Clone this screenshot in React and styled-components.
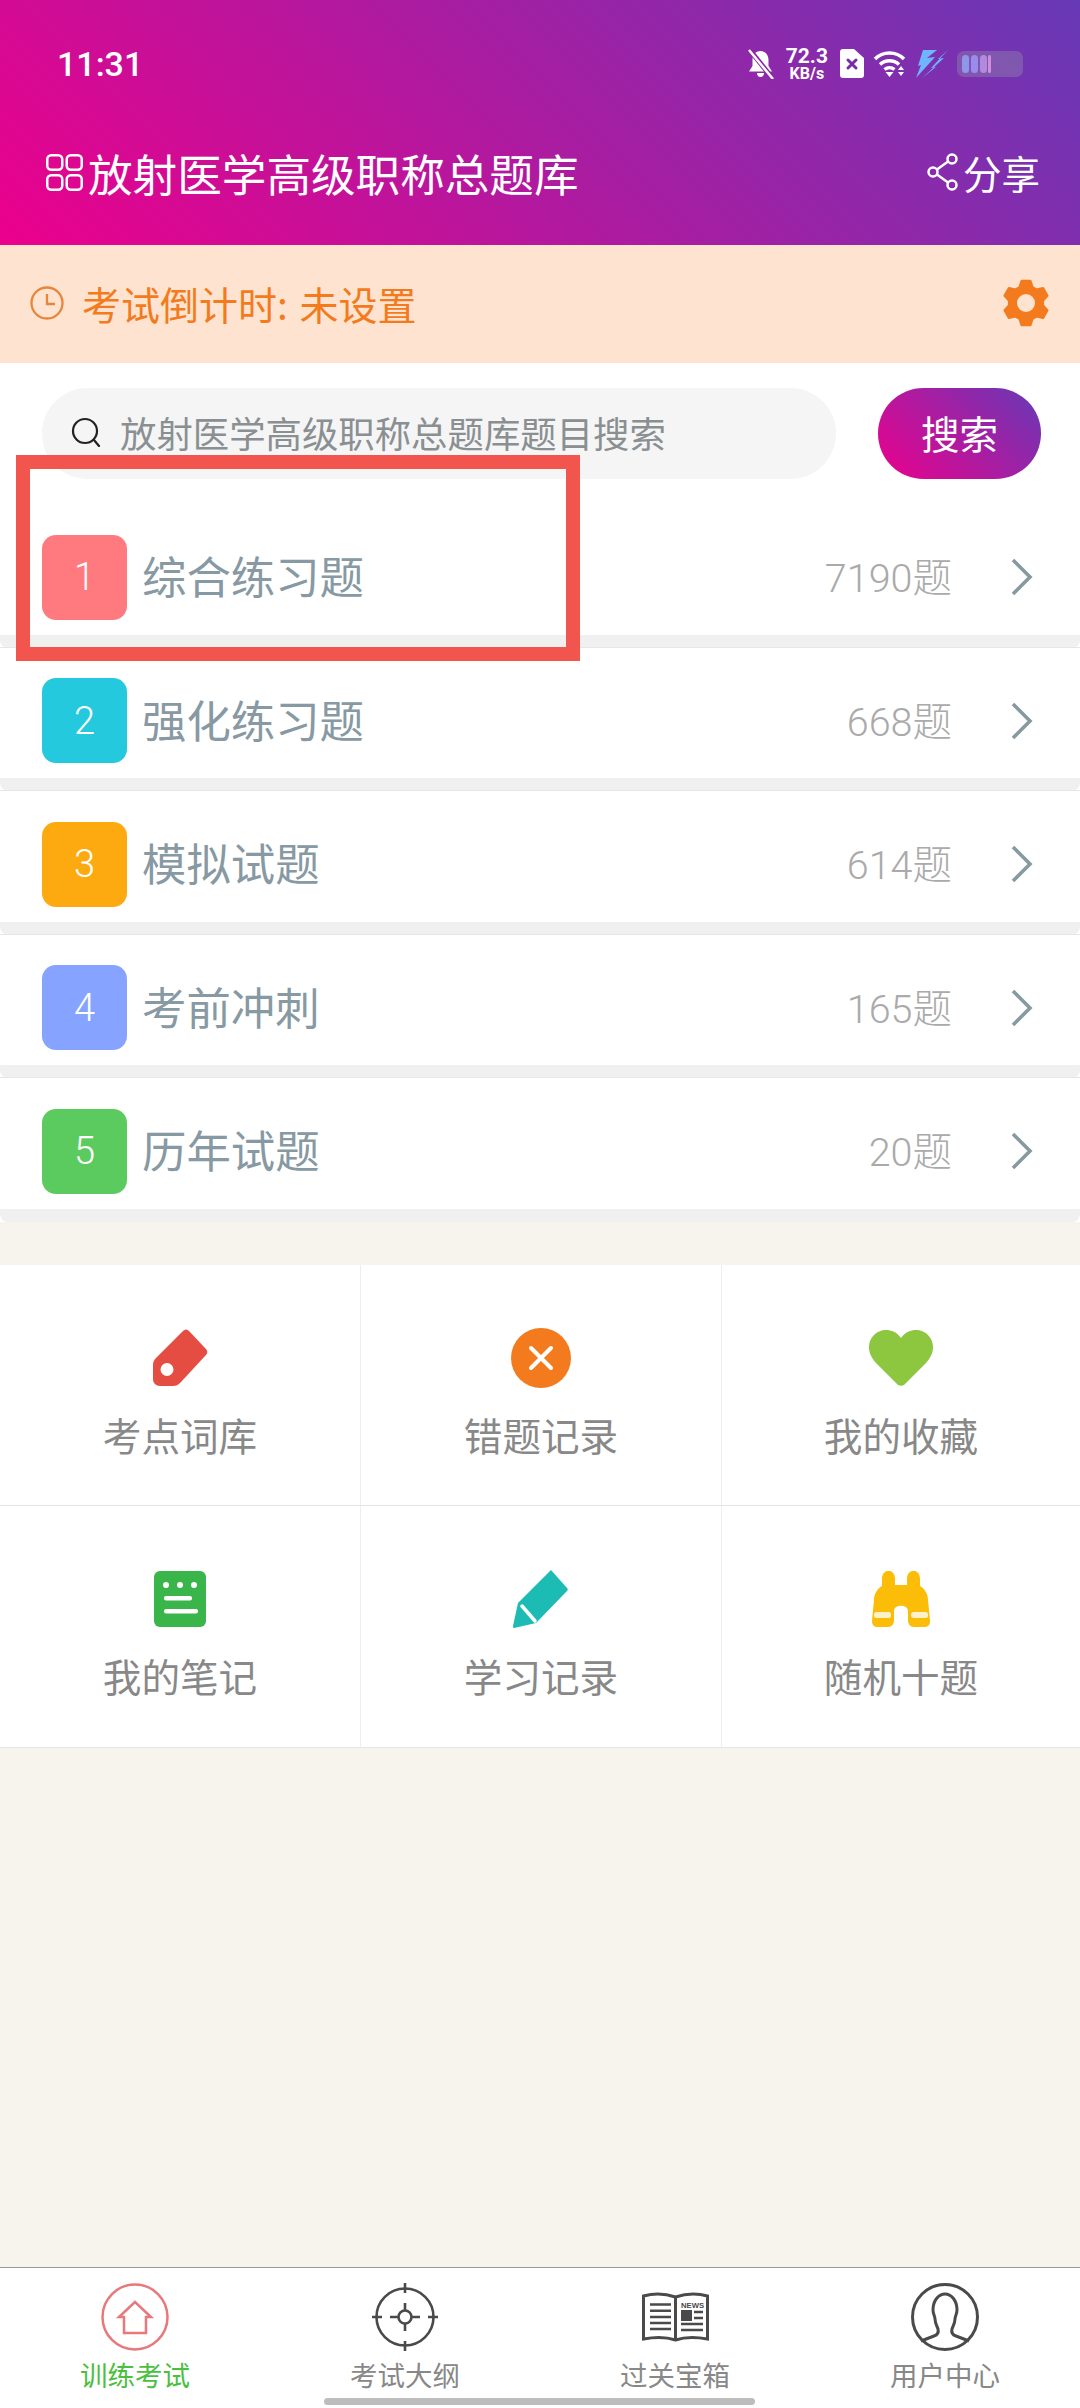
import React from "react";
import styled, { createGlobalStyle } from "styled-components";

const GlobalStyle = createGlobalStyle`
	html, body {
		margin: 0;
		padding: 0;
		background: #f7f4ee;
	}

	* {
		box-sizing: border-box;
	}

	body {
		font-family: "Noto Sans CJK SC", Roboto, sans-serif;
	}
`;

const Page = styled.div`
	position: relative;
	width: 1080px;
	height: 2408px;
	display: flex;
	flex-direction: column;
	overflow: hidden;
	background: #f7f4ee;
`;

const Header = styled.header`
	height: 245px;
	display: flex;
	flex-direction: column;
	background-image: linear-gradient(45deg, #ec008c, #6739b6);
	color: #fff;
`;

const StatusBar = styled.div`
	height: 127px;
	padding: 0 57px;
	display: flex;
	align-items: center;
	justify-content: space-between;
`;

const Time = styled.span`
	font-family: Roboto, sans-serif;
	font-size: 34px;
	font-weight: 500;
`;

const StatusIcons = styled.div`
	display: flex;
	align-items: center;
	gap: 9px;
`;

const Speed = styled.div`
	display: flex;
	flex-direction: column;
	align-items: center;
	margin: 0 3px;
	font-family: Roboto, sans-serif;
	font-weight: 700;
	font-size: 21px;
	line-height: 20px;

	small {
		font-size: 16px;
		line-height: 15px;
	}
`;

const TitleBar = styled.div`
	height: 90px;
	padding: 0 40px 0 46px;
	display: flex;
	align-items: center;
	justify-content: space-between;
`;

const Title = styled.h1`
	margin: 0;
	display: flex;
	align-items: center;
	gap: 5px;
	font-size: 44.6px;
	font-weight: 400;
`;

const Share = styled.div`
	display: flex;
	align-items: center;
	gap: 4px;
	font-size: 38.500px;
`;

const Countdown = styled.div`
	height: 118px;
	padding: 0 30px 3px;
	display: flex;
	align-items: center;
	justify-content: space-between;
	background: #fee4d0;
	color: #f37b1d;
`;

const CountdownText = styled.div`
	display: flex;
	align-items: center;
	gap: 18px;
	font-size: 39px;
	word-spacing: 3px;
`;

const SearchSection = styled.div`
	padding: 25px 39px 25px 42px;
	display: flex;
	align-items: center;
	gap: 42px;
	background: #fff;
`;

const SearchBox = styled.div`
	flex: 1;
	height: 91px;
	padding: 0 28px 4px;
	display: flex;
	align-items: center;
	gap: 18px;
	border-radius: 46px;
	background: #f5f5f5;
	color: #8a8f92;
	font-size: 36.4px;
`;

const SearchButton = styled.button`
	width: 163px;
	height: 91px;
	padding: 0 0 3px;
	border: 0;
	border-radius: 46px;
	background-image: linear-gradient(45deg, #ec008c, #6739b6);
	color: #fff;
	font: inherit;
	font-size: 38.500px;
`;

const List = styled.div`
	display: flex;
	flex-direction: column;
	background: #fff;
`;

const Row = styled.div`
	position: relative;
	height: 143.5px;
	padding: 31px 46px 15.5px 42px;
	display: flex;
	align-items: center;
	border-bottom: 13px solid #f0f0f0;
	border-radius: 0 0 8px 8px;

	&::after {
		content: "";
		position: absolute;
		left: 0;
		right: 0;
		bottom: -13px;
		height: 1px;
		background: #e6e6e6;
	}

	&:last-child::after {
		display: none;
	}
`;

const Badge = styled.span`
	width: 85px;
	height: 85px;
	display: flex;
	align-items: center;
	justify-content: center;
	border-radius: 14px;
	background: ${(p) => p.$color};
	color: #fff;
	font-family: Roboto, sans-serif;
	font-size: 38px;
	font-weight: 300;
`;

const RowTitle = styled.span`
	flex: 1;
	margin-left: 15px;
	padding-bottom: 5px;
	color: #8799a3;
	font-size: 44.400px;
`;

const RowCount = styled.span`
	margin-right: 58px;
	padding-bottom: 5px;
	color: #aaa;
	font-family: Roboto, "Noto Sans CJK SC", sans-serif;
	font-size: 39.5px;
	font-weight: 300;
`;

const MenuGrid = styled.div`
	margin-top: 43px;
	display: grid;
	grid-template-columns: 361px 361px 358px;
	background: #fff;
`;

const MenuCell = styled.div`
	height: 241.5px;
	padding-top: 64px;
	display: flex;
	flex-direction: column;
	align-items: center;
	border-right: 1px solid #eee;
	border-bottom: 1px solid #e5e5e5;
	color: #888;
	font-size: 38.6px;

	&:nth-child(3n) {
		border-right: 0;
	}
`;

const MenuIconSlot = styled.div`
	height: 58px;
	margin-bottom: 19px;
	display: flex;
	align-items: center;
	justify-content: center;
`;

const Spacer = styled.div`
	flex: 1;
`;

const BottomNav = styled.nav`
	position: relative;
	height: 141px;
	display: grid;
	grid-template-columns: repeat(4, 270px);
	border-top: 1px solid #999;
	background: #fff;
`;

const NavItem = styled.div`
	padding-top: 15px;
	display: flex;
	flex-direction: column;
	align-items: center;
	color: ${(p) => (p.$active ? "#4cbf3f" : "#888")};
	font-size: 27.500px;
	line-height: 32px;
`;

const NavIconSlot = styled.div`
	height: 68px;
	margin-bottom: 7px;
	display: flex;
	align-items: center;
	justify-content: center;
`;

const HomeBar = styled.div`
	position: absolute;
	left: 324px;
	bottom: 3px;
	width: 431px;
	height: 7px;
	border-radius: 4px;
	background: #bdbdbd;
`;

const Annotation = styled.div`
	position: absolute;
	left: 16px;
	top: 455px;
	width: 564px;
	height: 206px;
	border: 14px solid #f2544e;
`;

const BellOff = () => (
	<svg width="27" height="30" viewBox="0 0 27 30">
		<path fill="#fff" d="M13.500 2c5 0 8 4 8 9v6l3.500 5.500H2l3.500-5.500v-6c0-5 3-9 8-9zM10 24h7c0 2.500-1.500 4-3.500 4S10 26.500 10 24z" />
		<path stroke="#8a27a6" strokeWidth="5" d="M2 0l24 30" />
		<path stroke="#fff" strokeWidth="2.500" d="M2 1l24 29" />
	</svg>
);

const SimIcon = () => (
	<svg width="24" height="29" viewBox="0 0 24 29">
		<path fill="#fff" d="M3 0h11l10 9v17a3 3 0 0 1-3 3H3a3 3 0 0 1-3-3V3a3 3 0 0 1 3-3z" />
		<path stroke="#7a2aa8" strokeWidth="3" strokeLinecap="round" d="M8 11l8 8M16 11l-8 8" />
	</svg>
);

const WifiIcon = () => (
	<svg width="34" height="27" viewBox="0 0 34 27">
		<g fill="none" stroke="#fff" strokeWidth="3.500">
			<path d="M2 9c8-8 21-8 29 0" />
			<path d="M7 14.500c5.500-5 13.500-5 19 0" />
			<path d="M11.500 19.500c3-2.500 7-2.500 10 0" />
		</g>
		<path fill="#fff" d="M12.500 22h8L16.500 27zM28 16l3 4h-6zM25 22h6l-3 4z" />
	</svg>
);

const BoltIcon = () => (
	<svg width="32" height="28" viewBox="0 0 32 28">
		<path fill="#6fb4ff" d="M7 0h14L11 8l8-1L0 28l5-13-3 1zM32 0L15 18l5-1L6 28l22-20-6 1z" />
	</svg>
);

const BatteryIcon = () => (
	<svg width="66" height="26" viewBox="0 0 66 26">
		<rect width="66" height="26" rx="7" fill="#8a75ad" opacity="0.55" />
		<rect x="5" y="4" width="7" height="18" rx="3.500" fill="#8f97ea" />
		<rect x="14" y="4" width="7" height="18" rx="3.500" fill="#9a8cee" />
		<rect x="23" y="4" width="7" height="18" rx="3.500" fill="#b18ade" />
		<rect x="31" y="4" width="3" height="18" rx="1.500" fill="#cf8ddb" />
	</svg>
);

const AppsIcon = () => (
	<svg width="37" height="37" viewBox="0 0 37 37">
		<g fill="none" stroke="#fff" strokeWidth="2.500">
			<rect x="1.250" y="1.250" width="15" height="14.500" rx="4" />
			<rect x="20.750" y="1.250" width="15" height="14.500" rx="4" />
			<rect x="1.250" y="21.250" width="15" height="14.500" rx="4" />
			<rect x="20.750" y="21.250" width="15" height="14.500" rx="4" />
		</g>
	</svg>
);

const ShareIcon = () => (
	<svg width="32" height="38" viewBox="0 0 32 38">
		<g fill="none" stroke="#fff" strokeWidth="2.500">
			<circle cx="25" cy="6" r="4.500" />
			<circle cx="6" cy="19" r="4.500" />
			<circle cx="25" cy="32" r="4.500" />
			<path d="M21 8.500L10 16.500M10 21.500l11 8" />
		</g>
	</svg>
);

const ClockIcon = () => (
	<svg width="34" height="34" viewBox="0 0 34 34">
		<g fill="none" stroke="#e8853a" strokeWidth="2.300">
			<circle cx="17" cy="17" r="15.500" />
			<path d="M17 8v10h8" />
		</g>
	</svg>
);

// six teeth, one on top and one at the bottom
const gearPath = () => {
	const point = (radius, degrees) => {
		const angle = (degrees * Math.PI) / 180;
		return `${(24 + radius * Math.cos(angle)).toFixed(2)} ${(24 + radius * Math.sin(angle)).toFixed(2)}`;
	};
	const parts = [];
	for (let i = 0; i < 6; i++) {
		const middle = -90 + i * 60;
		parts.push(point(17, middle - 22), point(22.500, middle - 11), point(22.500, middle + 11), point(17, middle + 22));
	}
	return `M${parts.join("L")}Z`;
};

const GearIcon = () => (
	<svg width="48" height="48" viewBox="0 0 48 48">
		<path fill="#f37b1d" stroke="#f37b1d" strokeWidth="2.500" strokeLinejoin="round" d={gearPath()} />
		<circle cx="24" cy="24" r="9" fill="#fee4d0" />
	</svg>
);

const SearchIcon = () => (
	<svg width="32" height="30" viewBox="0 0 32 30">
		<g fill="none" stroke="#222" strokeWidth="2.200" strokeLinecap="round">
			<circle cx="15" cy="14" r="12" />
			<path d="M24 23l5 6" />
		</g>
	</svg>
);

const ChevronIcon = () => (
	<svg width="24" height="38" viewBox="0 0 24 38">
		<path fill="none" stroke="#8799a3" strokeWidth="3.600" d="M3 2l17 17-17 17" />
	</svg>
);

const TagIcon = () => (
	<svg width="56" height="58" viewBox="0 0 56 58">
		<path
			fill="#e54d42"
			fillRule="evenodd"
			d="M31 2c2-2 4-2 6 0l16 17c3 3 3 5 0 8L29 53c-3 3-5 4-8 4H8c-4 0-7-3-7-7V36c0-3 1-5 3-7zM15 34a6.500 6.500 0 1 0 0 13 6.500 6.500 0 0 0 0-13z"
		/>
	</svg>
);

const CrossIcon = () => (
	<svg width="60" height="60" viewBox="0 0 60 60">
		<circle cx="30" cy="30" r="30" fill="#f37b1d" />
		<path stroke="#fff" strokeWidth="4" strokeLinecap="round" d="M20 20l20 20M40 20l-20 20" />
	</svg>
);

const HeartIcon = () => (
	<svg width="64" height="56" viewBox="0 0 64 56">
		<path
			fill="#8dc63f"
			d="M32 8C28 2 22 0 17 0 7 0 0 8 0 17c0 7 3 11 7 16l22 22c2 1 4 1 6 0l22-22c4-5 7-9 7-16C64 8 57 0 47 0c-5 0-11 2-15 8z"
		/>
	</svg>
);

const NoteIcon = () => (
	<svg width="52" height="56" viewBox="0 0 52 56">
		<rect width="52" height="56" rx="6" fill="#39b54a" />
		<circle cx="12" cy="14" r="3" fill="#fff" />
		<circle cx="26" cy="14" r="3" fill="#fff" />
		<circle cx="40" cy="14" r="3" fill="#fff" />
		<rect x="10" y="25" width="28" height="4.500" rx="2" fill="#fff" />
		<rect x="10" y="38" width="34" height="4.500" rx="2" fill="#fff" />
	</svg>
);

const PenIcon = () => (
	<svg width="56" height="58" viewBox="0 0 56 58">
		<path fill="#1cbbb4" d="M38 0l16 18c1 1 1 2 0 3L23 53 1 58c-1 0-1-1-1-2l5-23z" />
		<path stroke="#fff" strokeWidth="3.500" strokeLinecap="round" d="M9 36l13 15" />
	</svg>
);

const BinocularIcon = () => (
	<svg width="60" height="56" viewBox="0 0 60 56">
		<path
			fill="#fbbd08"
			d="M11 8c0-11 13-11 13 0v6h12V8c0-11 13-11 13 0v7c5 3 8 8 8 14l2 21c0 4-2 6-6 6H43c-4 0-6-3-6-7V40c0-7-14-7-14 0v9c0 4-2 7-6 7H7c-4 0-6-2-6-6l2-21c0-6 3-11 8-14z"
		/>
		<rect x="3" y="41" width="17" height="6" rx="2.500" fill="#fdf1c8" />
		<rect x="40" y="41" width="17" height="6" rx="2.500" fill="#fdf1c8" />
	</svg>
);

const HomeIcon = () => (
	<svg width="68" height="68" viewBox="0 0 68 68">
		<circle cx="34" cy="34" r="32.500" fill="none" stroke="#e8797b" strokeWidth="2.500" />
		<path fill="none" stroke="#e8797b" strokeWidth="2.500" d="M34 19L18 34h5v16h22V34h5z" />
	</svg>
);

const TargetIcon = () => (
	<svg width="66" height="68" viewBox="0 0 66 68">
		<g fill="none" stroke="#4a4a4a" strokeWidth="2.600">
			<circle cx="33" cy="34" r="28.500" />
			<circle cx="33" cy="34" r="6.500" />
			<path d="M33 0v10M33 58v10M33 20v7.500M33 40.500V48" />
			<path d="M0 34h10M56 34h10M18 34h8.500M39.500 34H48" />
		</g>
	</svg>
);

const NewsIcon = () => (
	<svg width="67" height="50" viewBox="0 0 67 50">
		<path
			fill="none"
			stroke="#4a4a4a"
			strokeWidth="3"
			d="M1.500 47V4c11-3 23-2 32 1 9-3 21-4 32-1v43c-11-2-23-2-32 1-9-3-21-3-32-1zM33.500 5v43"
		/>
		<path
			stroke="#4a4a4a"
			strokeWidth="2.500"
			d="M8 12.500h21M8 18.700h21M8 25h21M8 31h21M8 37h21M39 32h22M39 38h22M52 20h9M52 26h9"
		/>
		<rect x="39" y="18" width="11" height="11" fill="#4a4a4a" />
		<text x="39" y="15.500" fontSize="8" fontWeight="700" fill="#4a4a4a" fontFamily="Liberation Sans, sans-serif" textLength="23" lengthAdjust="spacingAndGlyphs">
			NEWS
		</text>
	</svg>
);

const UserIcon = () => (
	<svg width="68" height="68" viewBox="0 0 68 68">
		<g fill="none" stroke="#4a4a4a" strokeWidth="3">
			<circle cx="34" cy="34" r="32.500" />
			<path d="M10 58l13-5c3-1 5-3 4-7-1-3-3-6-3-10 0-3-2-5-2-9 0-10 6-16 12-16s12 6 12 16c0 4-2 6-2 9 0 4-2 7-3 10-1 4 1 6 4 7l13 5" />
		</g>
	</svg>
);

const rows = [
	{ name: "综合练习题", count: "7190题", color: "#ff7a7f" },
	{ name: "强化练习题", count: "668题", color: "#25c9de" },
	{ name: "模拟试题", count: "614题", color: "#fcaa10" },
	{ name: "考前冲刺", count: "165题", color: "#86a4ff" },
	{ name: "历年试题", count: "20题", color: "#5bcb60" },
];

const menus = [
	{ name: "考点词库", icon: <TagIcon /> },
	{ name: "错题记录", icon: <CrossIcon /> },
	{ name: "我的收藏", icon: <HeartIcon /> },
	{ name: "我的笔记", icon: <NoteIcon /> },
	{ name: "学习记录", icon: <PenIcon /> },
	{ name: "随机十题", icon: <BinocularIcon /> },
];

const tabs = [
	{ name: "训练考试", icon: <HomeIcon />, active: true },
	{ name: "考试大纲", icon: <TargetIcon /> },
	{ name: "过关宝箱", icon: <NewsIcon /> },
	{ name: "用户中心", icon: <UserIcon /> },
];

function App() {
	return (
		<Page>
			<GlobalStyle />
			<Header>
				<StatusBar>
					<Time>11:31</Time>
					<StatusIcons>
						<BellOff />
						<Speed>
							72.3
							<small>KB/s</small>
						</Speed>
						<SimIcon />
						<WifiIcon />
						<BoltIcon />
						<BatteryIcon />
					</StatusIcons>
				</StatusBar>
				<TitleBar>
					<Title>
						<AppsIcon />
						放射医学高级职称总题库
					</Title>
					<Share>
						<ShareIcon />
						分享
					</Share>
				</TitleBar>
			</Header>
			<Countdown>
				<CountdownText>
					<ClockIcon />
					考试倒计时: 未设置
				</CountdownText>
				<GearIcon />
			</Countdown>
			<SearchSection>
				<SearchBox>
					<SearchIcon />
					放射医学高级职称总题库题目搜索
				</SearchBox>
				<SearchButton>搜索</SearchButton>
			</SearchSection>
			<List>
				{rows.map((row, index) => (
					<Row key={index}>
						<Badge $color={row.color}>{index + 1}</Badge>
						<RowTitle>{row.name}</RowTitle>
						<RowCount>{row.count}</RowCount>
						<ChevronIcon />
					</Row>
				))}
			</List>
			<MenuGrid>
				{menus.map((menu, index) => (
					<MenuCell key={index}>
						<MenuIconSlot>{menu.icon}</MenuIconSlot>
						{menu.name}
					</MenuCell>
				))}
			</MenuGrid>
			<Spacer />
			<BottomNav>
				{tabs.map((tab, index) => (
					<NavItem key={index} $active={tab.active}>
						<NavIconSlot>{tab.icon}</NavIconSlot>
						{tab.name}
					</NavItem>
				))}
				<HomeBar />
			</BottomNav>
			<Annotation />
		</Page>
	);
}

export default App;
